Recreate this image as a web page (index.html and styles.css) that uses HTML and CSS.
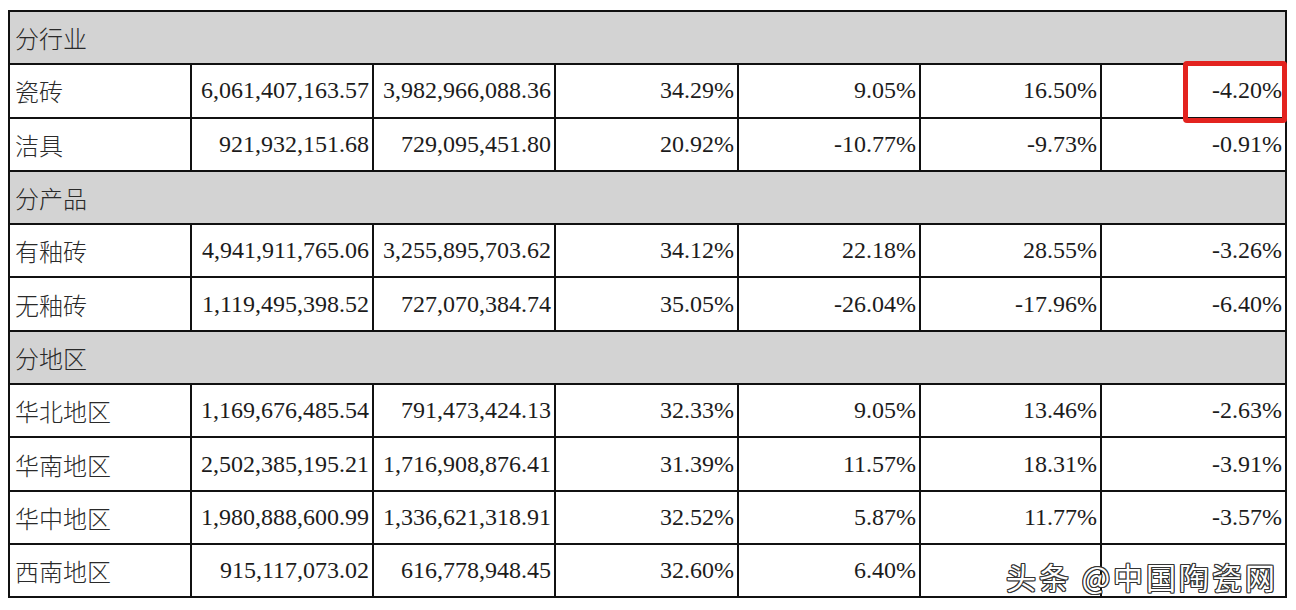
FILE: index.html
```html
<!DOCTYPE html>
<html lang="zh">
<head>
<meta charset="utf-8">
<link rel="stylesheet" href="styles.css">
</head>
<body>
<div class="wrap">
<table class="tbl">
<colgroup>
<col class="c1"><col class="c2"><col class="c3"><col class="c4"><col class="c5"><col class="c6"><col class="c7">
</colgroup>
<tr class="sec"><td colspan="7" class="lbl">分行业</td></tr>
<tr><td class="lbl">瓷砖</td><td>6,061,407,163.57</td><td>3,982,966,088.36</td><td>34.29%</td><td>9.05%</td><td>16.50%</td><td>-4.20%</td></tr>
<tr><td class="lbl">洁具</td><td>921,932,151.68</td><td>729,095,451.80</td><td>20.92%</td><td>-10.77%</td><td>-9.73%</td><td>-0.91%</td></tr>
<tr class="sec"><td colspan="7" class="lbl">分产品</td></tr>
<tr><td class="lbl">有釉砖</td><td>4,941,911,765.06</td><td>3,255,895,703.62</td><td>34.12%</td><td>22.18%</td><td>28.55%</td><td>-3.26%</td></tr>
<tr><td class="lbl">无釉砖</td><td>1,119,495,398.52</td><td>727,070,384.74</td><td>35.05%</td><td>-26.04%</td><td>-17.96%</td><td>-6.40%</td></tr>
<tr class="sec"><td colspan="7" class="lbl">分地区</td></tr>
<tr><td class="lbl">华北地区</td><td>1,169,676,485.54</td><td>791,473,424.13</td><td>32.33%</td><td>9.05%</td><td>13.46%</td><td>-2.63%</td></tr>
<tr><td class="lbl">华南地区</td><td>2,502,385,195.21</td><td>1,716,908,876.41</td><td>31.39%</td><td>11.57%</td><td>18.31%</td><td>-3.91%</td></tr>
<tr><td class="lbl">华中地区</td><td>1,980,888,600.99</td><td>1,336,621,318.91</td><td>32.52%</td><td>5.87%</td><td>11.77%</td><td>-3.57%</td></tr>
<tr><td class="lbl">西南地区</td><td>915,117,073.02</td><td>616,778,948.45</td><td>32.60%</td><td>6.40%</td><td></td><td></td></tr>
</table>
<div class="mark"></div>
<div class="wm">头条 @中国陶瓷网</div>
</div>
</body>
</html>
```
FILE: styles.css
```css
html, body {
  margin: 0;
  padding: 0;
  background: #ffffff;
}
.wrap {
  position: relative;
  margin: 10px 0 0 8px;
  width: 1280px;
}
.tbl {
  border-collapse: collapse;
  table-layout: fixed;
  width: 1279px;
  border: 2.5px solid #111;
  font-family: "Liberation Serif", "Times New Roman", serif;
  font-size: 24px;
  color: #1c1c1c;
}
.c1 { width: 182px; }
.c2 { width: 182px; }
.c3 { width: 182px; }
.c4 { width: 183px; }
.c5 { width: 182px; }
.c6 { width: 181px; }
.c7 { width: 185px; }
.tbl td {
  border: 2px solid #111;
  height: 51.3px;
  padding: 0 3px 0 4px;
  text-align: right;
  vertical-align: middle;
  white-space: nowrap;
  overflow: hidden;
}
.tbl td.lbl {
  text-align: left;
  padding-left: 5px;
  font-family: "Noto Sans CJK SC", sans-serif;
  font-weight: 300;
  font-size: 24px;
  color: #2a2a2a;
}
.tbl tr.sec td {
  background: #d3d3d3;
}
.mark {
  position: absolute;
  left: 1175px;
  top: 51px;
  width: 94px;
  height: 52px;
  border: 5px solid #e3231f;
  border-radius: 4px;
}
.wm {
  position: absolute;
  left: 998px;
  top: 548px;
  font-family: "Noto Sans CJK SC", sans-serif;
  font-size: 30px;
  letter-spacing: 3px;
  color: #ffffff;
  line-height: 36px;
  white-space: nowrap;
  text-shadow: 1px 0 0 #333, -1px 0 0 #333, 0 1px 0 #333, 0 -1px 0 #333, 1px 1px 0 #333, -1px -1px 0 #333, 1px -1px 0 #333, -1px 1px 0 #333;
}
```
